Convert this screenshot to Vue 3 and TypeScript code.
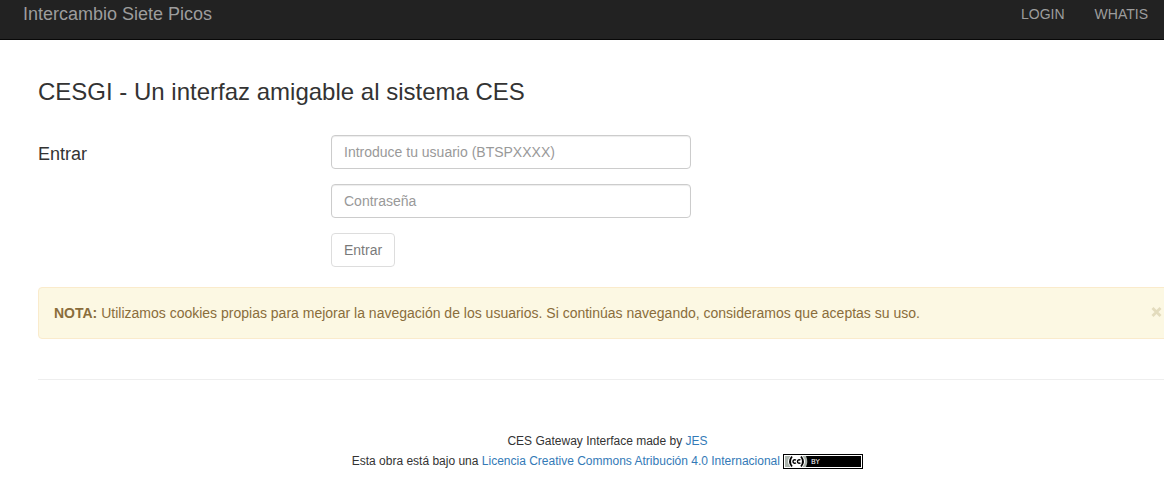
<script setup lang="ts">
import { ref } from 'vue'

const user = ref('')
const password = ref('')
const noteOpen = ref(true)
</script>

<template>
  <div class="page">
    <nav class="navbar">
      <a class="brand" href="#">Intercambio Siete Picos</a>
      <div class="links">
        <a href="#login">LOGIN</a>
        <a href="#whatis">WHATIS</a>
      </div>
    </nav>

    <main class="container">
      <h1>CESGI - Un interfaz amigable al sistema CES</h1>

      <form class="login" @submit.prevent>
        <h2>Entrar</h2>
        <div class="fields">
          <input v-model="user" type="text" aria-label="Usuario" placeholder="Introduce tu usuario (BTSPXXXX)" />
          <input v-model="password" type="password" aria-label="Contraseña" placeholder="Contraseña" />
          <button class="submit" type="submit" :disabled="!user || !password">Entrar</button>
        </div>
      </form>

      <div v-if="noteOpen" class="note" role="alert">
        <p><strong>NOTA:</strong> Utilizamos cookies propias para mejorar la navegación de los usuarios. Si continúas navegando, consideramos que aceptas su uso.</p>
        <button class="close" type="button" aria-label="Cerrar" @click="noteOpen = false">
          <svg width="11" height="10" viewBox="0 0 11 10" aria-hidden="true">
            <path d="M1.5 1L9.5 9M9.5 1L1.5 9" />
          </svg>
        </button>
      </div>

      <footer>
        <p>CES Gateway Interface made by <a href="#jes">JES</a></p>
        <p>
          Esta obra está bajo una <a href="#licencia">Licencia Creative Commons Atribución 4.0 Internacional</a> <a class="badge" href="#licencia" aria-label="Licencia Creative Commons BY">
            <svg width="80" height="15" viewBox="0 0 80 15">
              <rect width="80" height="15" fill="#000" />
              <rect x="1" y="1" width="78" height="13" fill="#fff" />
              <rect x="2" y="2" width="76" height="11" fill="#000" />
              <path d="M2 2h21q2.500 5.500 0 11H2z" fill="#aab2ab" />
              <path d="M7.500 2h12q5 5.500 0 11h-12q-5 -5.500 0 -11z" fill="#fff" />
              <path d="M9 2.500Q5 7.500 9 12.500M18 2.500Q22 7.500 18 12.500" fill="none" stroke="#000" stroke-width="1.800" />
              <path d="M12.900 6.300A1.700 1.700 0 1 0 12.900 8.700M17.400 6.300A1.700 1.700 0 1 0 17.400 8.700" fill="none" stroke="#000" stroke-width="1.400" />
              <text x="28" y="10">BY</text>
            </svg>
          </a>
        </p>
      </footer>
    </main>
  </div>
</template>

<style>
body {
  margin: 0;
  background: #fff;
}
</style>

<style scoped>
.page {
  font: 14px/20px "Liberation Sans", Arial, sans-serif;
  color: #333;
  overflow-x: hidden;
}
a {
  color: #337ab7;
  text-decoration: none;
}
h1,
h2,
p {
  margin: 0;
  font-weight: 400;
}
.navbar {
  display: flex;
  justify-content: space-between;
  box-sizing: border-box;
  height: 40px;
  padding: 4px 16px 0 23px;
  background: #222;
  border-bottom: 1px solid #080808;
}
.navbar a {
  color: #9d9d9d;
}
.brand {
  font-size: 18px;
}
.links {
  display: flex;
  gap: 30px;
}
.container {
  margin: 0 -13px 0 38px;
}
h1 {
  padding-top: 39px;
  font-size: 24px;
  line-height: 26px;
}
.login {
  display: flex;
  margin-top: 30px;
}
h2 {
  flex: 0 0 293px;
  padding-top: 9px;
  font-size: 18px;
  line-height: 20px;
}
.fields {
  display: flex;
  flex-direction: column;
  align-items: flex-start;
  gap: 15px;
  flex: 0 1 360px;
}
input {
  box-sizing: border-box;
  width: 100%;
  height: 34px;
  padding: 6px 12px;
  border: 1px solid #ccc;
  border-radius: 4px;
  box-shadow: inset 0 1px 1px rgba(0, 0, 0, 0.075);
  font: inherit;
  color: #555;
}
input::placeholder {
  color: #999;
  opacity: 1;
}
.submit {
  padding: 6px 12px;
  border: 1px solid #ccc;
  border-radius: 4px;
  background: #fff;
  color: #333;
  font: inherit;
}
.submit:disabled {
  opacity: 0.65;
}
.note {
  display: flex;
  justify-content: space-between;
  align-items: center;
  margin-top: 20px;
  padding: 15px 14px 15px 15px;
  border: 1px solid #faebcc;
  border-radius: 4px;
  background: #fcf8e3;
  color: #8a6d3b;
}
.close {
  display: flex;
  padding: 0 0 3px;
  border: 0;
  background: none;
}
.close path {
  stroke: #e3dcbd;
  stroke-width: 2.8;
}
footer {
  margin-top: 40px;
  padding-top: 51px;
  border-top: 1px solid #eee;
  font-size: 12px;
  text-align: center;
}
.badge svg {
  vertical-align: middle;
}
.badge text {
  fill: #fff;
  font: 7px "DejaVu Sans", sans-serif;
}
</style>
